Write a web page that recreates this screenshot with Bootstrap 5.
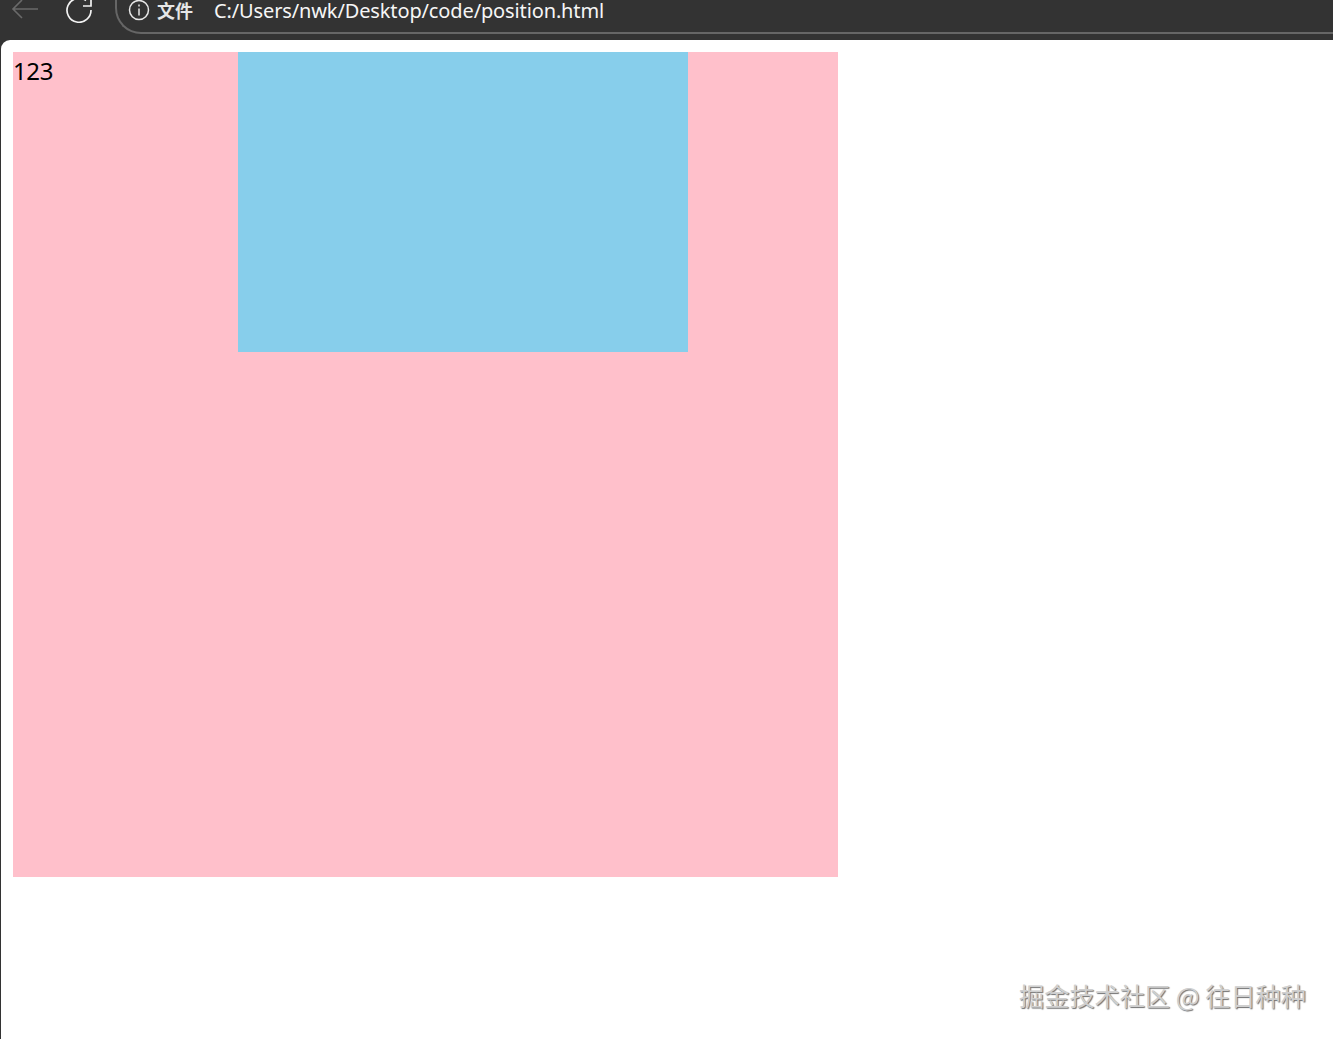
<!doctype html>
<html lang="zh">
<head>
<meta charset="utf-8">
<title>position</title>
<link href="https://cdn.jsdelivr.net/npm/bootstrap@5.3.0/dist/css/bootstrap.min.css" rel="stylesheet">
<style>
html,body{height:100%;margin:0;overflow:hidden}
body{background:#333;font-family:"Noto Sans","Noto Sans CJK SC",sans-serif}
.chrome-bar{height:40px;background:#333;color:#f4f4f4;overflow:hidden}
.nav-ico{width:28px;height:24px;flex:none;margin-top:-1px}
.ico-back{margin-left:11px}
.ico-reload{margin-left:26px}
.addr-box{margin-left:22px;height:34px;border:2px solid #666;border-top:0;border-right:0;border-bottom-left-radius:26px;padding-left:11px}
.info-ico{width:22px;height:21px;flex:none}
.file-label{font-weight:700;font-size:18px;color:#e6e6e6;margin-left:7px;line-height:20px;font-family:"Noto Sans CJK SC","Noto Sans",sans-serif}
.addr-text{font-size:20px;line-height:22px;margin-left:21px;white-space:nowrap;color:#f6f6f6;letter-spacing:-.13px}
.viewport-pane{height:999px;background:#fff;border-top-left-radius:9px;margin-left:1px;padding:12px}
.pink-box{width:825px;height:825px;background:#ffc0cb;font-size:24px;line-height:38px;color:#000;letter-spacing:-.4px}
.blue-box{left:225px;top:0;width:450px;height:300px;background:#87ceeb}
.mark-text{right:27px;bottom:29px;font-size:25.2px;line-height:30px;color:#cfcfcf;white-space:nowrap;text-shadow:1px 1px 1px #707070,-1px -1px 0 #fff;font-family:"Noto Sans CJK SC","Noto Sans",sans-serif}
</style>
</head>
<body class="position-relative">
<div class="chrome-bar d-flex align-items-start">
  <svg class="nav-ico ico-back" viewBox="0 0 28 24" fill="none" stroke="#6a6a6a" stroke-width="1.6"><path d="M2 10H27M11 1 2 10l9 9"/></svg>
  <svg class="nav-ico ico-reload" viewBox="0 0 28 24" fill="none" stroke="#f2f2f2" stroke-width="1.7"><path d="M21 1.500A12 12 0 1 0 26 11"/><path d="M18 7h8V-1"/></svg>
  <div class="addr-box flex-grow-1 d-flex align-items-start">
    <svg class="info-ico" viewBox="0 0 22 21" fill="none" stroke="#e8e8e8" stroke-width="1.5"><circle cx="11" cy="10" r="9.500"/><path d="M11 8.500v7M11 4.500v2"/></svg>
    <span class="file-label">文件</span>
    <span class="addr-text">C:/Users/nwk/Desktop/code/position.html</span>
  </div>
</div>
<div class="viewport-pane">
  <div class="pink-box position-relative">123
    <div class="blue-box position-absolute"></div>
  </div>
</div>
<div class="mark-text position-absolute">掘金技术社区 @ 往日种种</div>
<script src="https://cdn.jsdelivr.net/npm/bootstrap@5.3.0/dist/js/bootstrap.bundle.min.js"></script>
</body>
</html>
